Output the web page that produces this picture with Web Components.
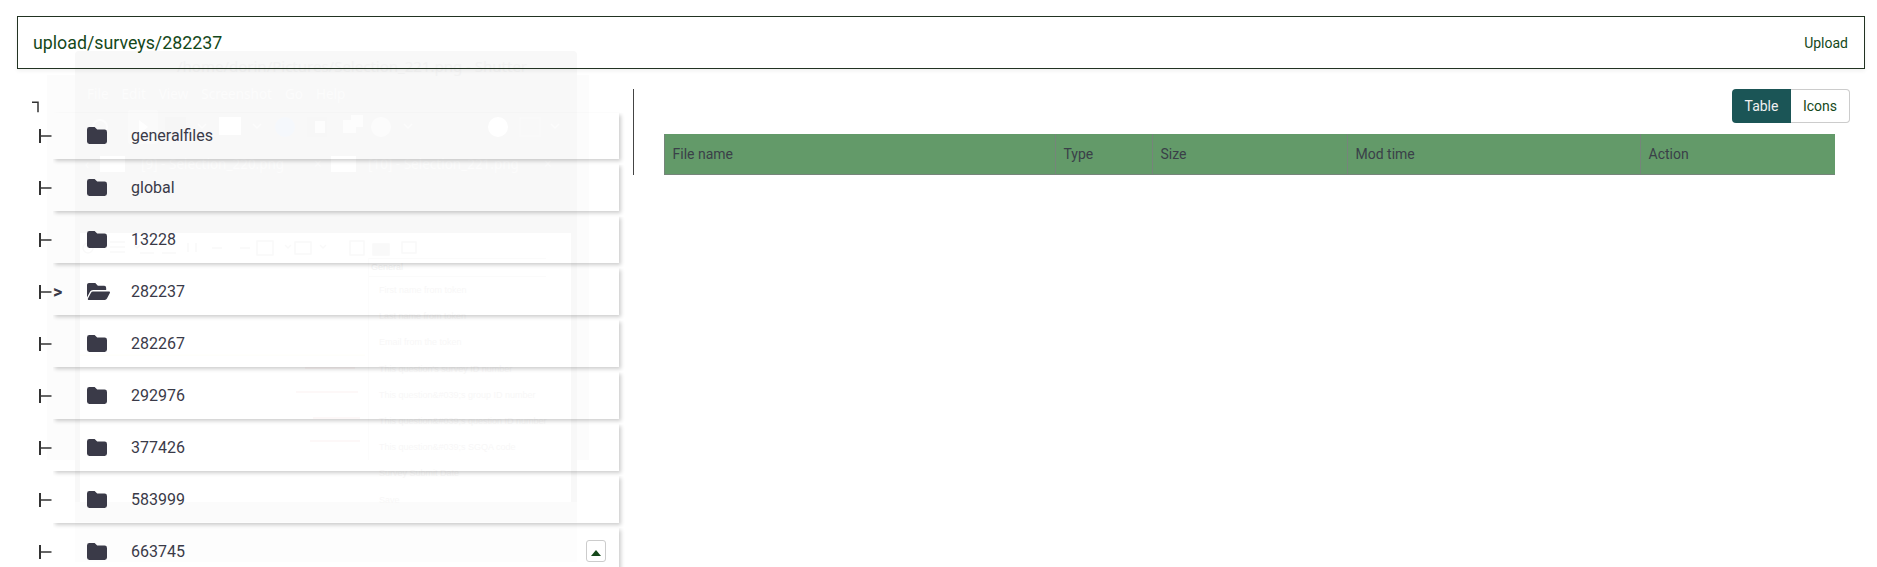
<!DOCTYPE html>
<html lang="en">
<head>
<meta charset="utf-8">
<title>File manager</title>
<style>
    html{background:#fff;}
    html,body{margin:0;height:567px;overflow:hidden;}
    body{font-family:Roboto,"Liberation Sans",sans-serif;}
</style>
</head>
<body>
<ghost-window></ghost-window>
<file-manager>
    <path-bar slot="top" path="upload/surveys/282237"></path-bar>
    <folder-tree slot="tree">
        <folder-row name="generalfiles"></folder-row>
        <folder-row name="global"></folder-row>
        <folder-row name="13228"></folder-row>
        <folder-row name="282237" open></folder-row>
        <folder-row name="282267"></folder-row>
        <folder-row name="292976"></folder-row>
        <folder-row name="377426"></folder-row>
        <folder-row name="583999"></folder-row>
        <folder-row name="663745"><scroll-top-button slot="action"></scroll-top-button></folder-row>
    </folder-tree>
    <file-panel slot="files"></file-panel>
</file-manager>

<script>
const file_manager_template = document.createElement('template');
file_manager_template.innerHTML = `
<style>
    :host{
        display:block;
        padding:16px 12px 0 17px;
    }
    .columns{
        display:flex;
        align-items:flex-start;
        margin-top:20px;
    }
    .tree{
        width:616px;
        flex:none;
    }
    .files{
        flex:1;
        min-width:0;
    }
</style>
<slot name="top"></slot>
<div class="columns">
    <div class="tree"><slot name="tree"></slot></div>
    <div class="files"><slot name="files"></slot></div>
</div>
`;
class FileManager extends HTMLElement{
    constructor(){
        super();
        this.attachShadow({mode:'open'});
        this.shadowRoot.appendChild(file_manager_template.content.cloneNode(true));
    }
}

const path_bar_template = document.createElement('template');
path_bar_template.innerHTML = `
<style>
    :host{
        display:flex;
        align-items:center;
        justify-content:space-between;
        box-sizing:border-box;
        height:53px;
        padding:0 16px 0 15px;
        border:1px solid #223322;
        box-shadow:0 2px 4px rgba(0,0,0,.06);
        color:#14481a;
    }
    #path{font-size:17.8px;}
    #upload{font-size:14px;}
</style>
<span id="path"></span>
<span id="upload">Upload</span>
`;
class PathBar extends HTMLElement{
    constructor(){
        super();
        this.attachShadow({mode:'open'});
        this.shadowRoot.appendChild(path_bar_template.content.cloneNode(true));
    }
    connectedCallback(){
        this.shadowRoot.getElementById('path').textContent = this.getAttribute('path');
    }
}

const folder_tree_template = document.createElement('template');
folder_tree_template.innerHTML = `
<style>
    :host{display:block;}
    .corner{
        display:block;
        height:23.5px;
    }
    svg{display:block;}
</style>
<div class="corner">
    <svg width="40" height="24" viewBox="0 0 40 24"><path d="M15 13.25h6v10" fill="none" stroke="#333" stroke-width="1.5"/></svg>
</div>
<slot></slot>
`;
class FolderTree extends HTMLElement{
    constructor(){
        super();
        this.attachShadow({mode:'open'});
        this.shadowRoot.appendChild(folder_tree_template.content.cloneNode(true));
    }
}

const FOLDER_CLOSED = '<svg width="20" height="17" viewBox="0 0 20 17"><path d="M2.4 0h5.2l2.6 2.6h7.4a2.4 2.4 0 0 1 2.4 2.4v9.6a2.4 2.4 0 0 1-2.4 2.4H2.4A2.4 2.4 0 0 1 0 14.600V2.400A2.400 2.400 0 0 1 2.400 0z" fill="#3a3a48"/></svg>';
const FOLDER_OPEN = '<svg width="23" height="17" viewBox="0 64 576 384" preserveAspectRatio="none"><path d="M572.694 292.093L500.27 416.248A63.997 63.997 0 0 1 444.989 448H45.025c-18.523 0-30.064-20.093-20.731-36.093l72.424-124.155A64 64 0 0 1 152 256h399.964c18.523 0 30.064 20.093 20.73 36.093zM152 224h328v-48c0-26.51-21.49-48-48-48H272l-64-64H48C21.49 64 0 85.49 0 112v278.046l69.077-118.418C86.214 242.25 117.989 224 152 224z" fill="#3a3a48"/></svg>';

const folder_row_template = document.createElement('template');
folder_row_template.innerHTML = `
<style>
    :host{
        display:flex;
        align-items:center;
        height:46.5px;
        margin:0 14px 5.45px 0;
        padding-left:22px;
        color:#3a3a48;
    }
    .branch{
        flex:none;
        width:14px;
        margin-top:1px;
    }
    .branch svg,.icon svg{display:block;}
    .card{
        flex:1;
        display:flex;
        align-items:center;
        align-self:stretch;
        box-shadow:2px 2px 4px rgba(0,0,0,.2);
        clip-path:inset(0 -8px -8px 0);
        font-size:16px;
    }
    .marker{
        flex:none;
        width:34px;
        font-size:18px;
        font-weight:700;
        line-height:1;
    }
    .icon{
        flex:none;
        width:44px;
    }
    .name{flex:1;}
    ::slotted([slot=action]){margin-right:13.5px;}
</style>
<div class="branch">
    <svg width="14" height="14" viewBox="0 0 14 14"><path d="M1 0v14" fill="none" stroke="#333" stroke-width="2"/><path d="M1 7h11.500" fill="none" stroke="#333" stroke-width="1.500"/></svg>
</div>
<div class="card">
    <span class="marker"></span>
    <span class="icon"></span>
    <span class="name"></span>
    <slot name="action"></slot>
</div>
`;
class FolderRow extends HTMLElement{
    constructor(){
        super();
        this.attachShadow({mode:'open'});
        this.shadowRoot.appendChild(folder_row_template.content.cloneNode(true));
    }
    connectedCallback(){
        const isOpen = this.hasAttribute('open');
        this.shadowRoot.querySelector('.name').textContent = this.getAttribute('name');
        this.shadowRoot.querySelector('.marker').textContent = isOpen ? '>' : '';
        this.shadowRoot.querySelector('.icon').innerHTML = isOpen ? FOLDER_OPEN : FOLDER_CLOSED;
    }
}

const scroll_top_template = document.createElement('template');
scroll_top_template.innerHTML = `
<style>
    :host{
        display:flex;
        align-items:center;
        justify-content:center;
        box-sizing:border-box;
        width:20px;
        height:22px;
        border:1px solid #ccc;
        border-radius:3px;
        background:#fff;
    }
    svg{display:block;margin-top:3px;}
</style>
<svg width="10" height="6" viewBox="0 0 10 6"><path d="M5 0l5 6H0z" fill="#14481a"/></svg>
`;
class ScrollTopButton extends HTMLElement{
    constructor(){
        super();
        this.attachShadow({mode:'open'});
        this.shadowRoot.appendChild(scroll_top_template.content.cloneNode(true));
    }
}

const file_panel_template = document.createElement('template');
file_panel_template.innerHTML = `
<style>
    :host{
        display:block;
        box-sizing:border-box;
        border-left:1px solid #444;
        padding:0 30px;
        height:86px;
    }
    .bar{
        display:flex;
        justify-content:flex-end;
        margin:0 -15px 11px 0;
    }
</style>
<div class="bar"><view-toggle></view-toggle></div>
<file-table></file-table>
`;
class FilePanel extends HTMLElement{
    constructor(){
        super();
        this.attachShadow({mode:'open'});
        this.shadowRoot.appendChild(file_panel_template.content.cloneNode(true));
    }
}

const view_toggle_template = document.createElement('template');
view_toggle_template.innerHTML = `
<style>
    :host{
        display:flex;
        height:34px;
        font-size:14px;
    }
    span{
        display:flex;
        align-items:center;
        justify-content:center;
        box-sizing:border-box;
    }
    .on{
        width:59px;
        background:#1b5556;
        color:#f0f0f0;
        border-radius:4px 0 0 4px;
    }
    .off{
        width:59px;
        color:#14481a;
        border:1px solid #ccc;
        border-left:0;
        border-radius:0 4px 4px 0;
    }
</style>
<span class="on">Table</span>
<span class="off">Icons</span>
`;
class ViewToggle extends HTMLElement{
    constructor(){
        super();
        this.attachShadow({mode:'open'});
        this.shadowRoot.appendChild(view_toggle_template.content.cloneNode(true));
    }
}

const file_table_template = document.createElement('template');
file_table_template.innerHTML = `
<style>
    :host{
        display:grid;
        grid-template-columns:391px 97px 195px 293px 1fr;
        height:41px;
        box-sizing:border-box;
        border-bottom:1px solid #75857a;
        background:#639a69;
        color:#3a4048;
        font-size:14px;
    }
    div{
        display:flex;
        align-items:center;
        padding-left:7.5px;
        border-left:1px solid #75857a;
    }
    div:first-child{border-left:0;padding-left:8px;}
</style>
<div>File name</div>
<div>Type</div>
<div>Size</div>
<div>Mod time</div>
<div>Action</div>
`;
class FileTable extends HTMLElement{
    constructor(){
        super();
        this.attachShadow({mode:'open'});
        this.shadowRoot.appendChild(file_table_template.content.cloneNode(true));
    }
}

// faint picture of another window that shows through the page
const ghost_window_template = document.createElement('template');
ghost_window_template.innerHTML = `
<style>
    :host{
        position:absolute;
        left:47px;
        top:75px;
        width:542px;
        height:385px;
        z-index:-1;
        background:#fcfcfc;
        font-family:"Noto Sans","Liberation Sans",sans-serif;
    }
    .win{
        position:absolute;
        left:28px;
        top:-24px;
        width:502px;
        height:511px;
        display:flex;
        flex-direction:column;
        background:#f8f8f8;
        border-radius:4px 4px 0 0;
    }
    .title{
        height:30px;
        flex:none;
        display:flex;
        align-items:center;
        padding-left:102px;
        font-size:15px;
        color:#f2f2f2;
        white-space:nowrap;
    }
    .menu{
        height:26px;
        flex:none;
        display:flex;
        align-items:center;
        gap:13px;
        padding-left:12px;
        font-size:13.500px;
        color:#fcfcfc;
    }
    svg{display:block;flex:none;}
    .tabs{
        height:34px;
        flex:none;
        display:flex;
        align-items:center;
        font-size:13.500px;
        color:#fcfcfc;
        white-space:nowrap;
    }
    .tabs i{
        display:block;
        flex:none;
        width:25px;
        height:16px;
        background:#fff;
    }
    .spacer{height:52px;flex:none;}
    .doc{
        height:269px;
        flex:none;
        margin:0 6px 0 5px;
        background:#fff;
        position:relative;
    }
    .list{
        position:absolute;
        left:288px;
        top:25px;
        width:177px;
        height:202px;
        border-left:1px solid #fcfcfc;
        font-family:"Liberation Sans",sans-serif;
        font-size:9px;
        color:#f8f7f7;
        white-space:nowrap;
    }
    .list .head{
        height:17px;
        line-height:17px;
        padding-left:2px;
        color:#f3f3f3;
        border-top:1px solid #fbfbfb;
        border-bottom:1px solid #fbfbfb;
    }
    .list div.item{
        height:26.200px;
        line-height:26.200px;
        padding-left:10px;
    }
    .rest{height:20px;flex:none;background:#fbfbfb;}
    .tail{flex:1;background:#fdfdfd;}
</style>
<div class="win">
    <div class="title">/home/dorin/Pictures/Selection_221.png - Shutter</div>
    <div class="menu"><span>File</span><span>Edit</span><span>View</span><span>Screenshot</span><span>Go</span><span>Help</span></div>
    <svg width="502" height="40" viewBox="0 0 502 40">
        <circle cx="25" cy="20" r="7" fill="none" stroke="#fcfcfc" stroke-width="2"/>
        <rect x="53" y="3" width="30" height="34" rx="3" fill="#fafafa"/>
        <path d="M64 13l9 7-9 7z" fill="#fff"/>
        <rect x="90" y="10" width="21" height="20" fill="#f6f6f6"/>
        <path d="M123 17l4 4 4-4M178 17l4 4 4-4M329 17l4 4 4-4M476 17l4 4 4-4" fill="none" stroke="#fcfcfc" stroke-width="1.500"/>
        <rect x="144" y="10" width="22" height="18" fill="#fff"/>
        <circle cx="210" cy="20" r="10" fill="#f5f8fc"/>
        <rect x="232" y="10" width="20" height="20" fill="#f7f7f7"/>
        <rect x="240" y="14" width="10" height="12" fill="#fdfdfd"/>
        <rect x="268" y="13" width="13" height="13" fill="#fdfdfd"/>
        <rect x="276" y="8" width="12" height="12" fill="#fdfdfd"/>
        <circle cx="306" cy="20" r="10" fill="#fcfcfc"/>
        <circle cx="423" cy="20" r="10" fill="#fff"/>
        <rect x="445" y="11" width="20" height="18" fill="none" stroke="#fafafa"/>
    </svg>
    <div class="tabs">
        <span style="margin-left:10px;width:15px">&lsaquo;</span><i></i>
        <span style="margin-left:16px;width:173px">[9] - Selection_220.png</span>
        <span style="width:17px">&times;</span><i></i>
        <span style="margin-left:12px;width:176px">[10] - Selection_221.png</span>
        <span>&times;</span>
    </div>
    <div class="spacer"></div>
    <div class="doc">
        <svg width="491" height="269" viewBox="0 0 491 269" style="position:absolute;left:0;top:0">
            <g fill="none" stroke="#f9f9f9" stroke-width="1.500">
                <circle cx="8" cy="15" r="5"/>
                <path d="M30 9h15M30 14h15M30 19h15M54 12l3 3 3-3M60 20h14M82 20h14M108 10v9M116 10v9M132 15h10M160 15h10"/>
                <rect x="177" y="8" width="16" height="14"/>
                <path d="M205 12l3 3 3-3"/>
                <rect x="215" y="9" width="16" height="12"/>
                <path d="M240 12l3 3 3-3"/>
                <rect x="270" y="8" width="14" height="14"/>
                <rect x="293" y="11" width="16" height="11" fill="#f9f9f9"/>
                <rect x="322" y="9" width="14" height="11"/>
            </g>
            <path d="M0 122h285" stroke="#fefef8"/>
            <path d="M225 135h50M216 159h62M233 185h47M230 208h50" stroke="#fdf6f6" stroke-width="1.500"/>
        </svg>
        <div class="list">
            <div class="head">General</div>
            <div class="item">First name from token</div>
            <div class="item">Last name from token</div>
            <div class="item">Email from the token</div>
            <div class="item">This question's survey ID number</div>
            <div class="item">This question&amp;#039;s group ID number</div>
            <div class="item">This question&amp;#039;s question ID number</div>
            <div class="item">This question&amp;#039;s SGQA code</div>
            <div class="item">Survey Submit Date</div>
            <div class="item">Save</div>
        </div>
    </div>
    <div class="rest"></div>
    <div class="tail"></div>
</div>
`;
class GhostWindow extends HTMLElement{
    constructor(){
        super();
        this.attachShadow({mode:'open'});
        this.shadowRoot.appendChild(ghost_window_template.content.cloneNode(true));
    }
}

window.customElements.define('file-manager',FileManager);
window.customElements.define('path-bar',PathBar);
window.customElements.define('folder-tree',FolderTree);
window.customElements.define('folder-row',FolderRow);
window.customElements.define('scroll-top-button',ScrollTopButton);
window.customElements.define('file-panel',FilePanel);
window.customElements.define('view-toggle',ViewToggle);
window.customElements.define('file-table',FileTable);
window.customElements.define('ghost-window',GhostWindow);
</script>
</body>
</html>
